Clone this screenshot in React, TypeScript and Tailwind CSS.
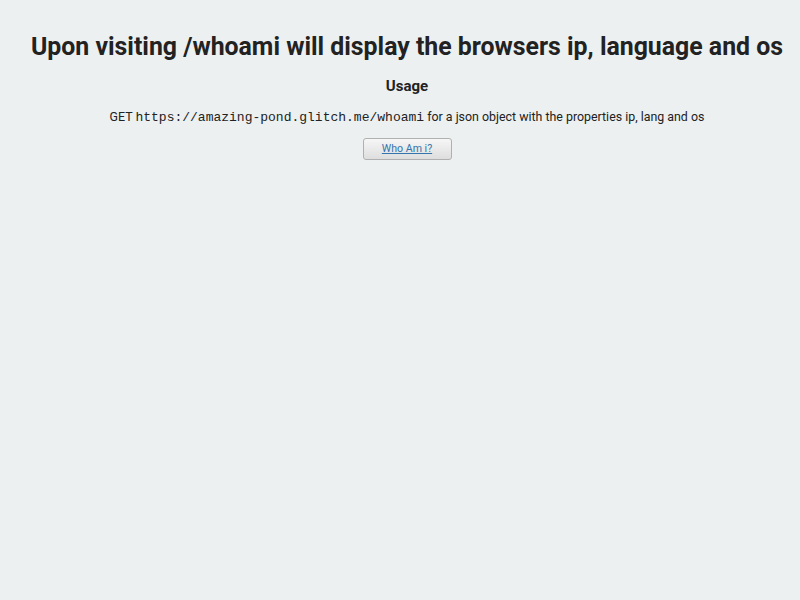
export default function App() {
  return (
    <div className="min-h-[600px] w-full bg-[#ecf0f1] pl-[14px] text-[#222] font-['Roboto',sans-serif]">
      <div className="flex flex-col items-center pt-[31px]">
        <h1 className="text-[24.85px] font-bold leading-[32px] whitespace-nowrap">
          Upon visiting /whoami will display the browsers ip, language and os
        </h1>
        <h3 className="mt-[13px] text-[15px] font-bold leading-[20px]">Usage</h3>
        <p className="mt-[12px] text-[12.4px] leading-[18px] whitespace-nowrap">
          GET <code className="font-['Liberation_Mono',monospace] text-[13px]">https://amazing-pond.glitch.me/whoami</code> for a json object with the properties ip, lang and os
        </p>
        <button className="mt-[11px] w-[89px] h-[22px] rounded-[3px] border border-[#b0b0b0] bg-gradient-to-b from-[#f6f6f6] to-[#dedede] text-[10.6px] leading-[20px]">
          <a className="text-[#3474ad] underline" href="#">Who Am i?</a>
        </button>
      </div>
    </div>
  );
}
